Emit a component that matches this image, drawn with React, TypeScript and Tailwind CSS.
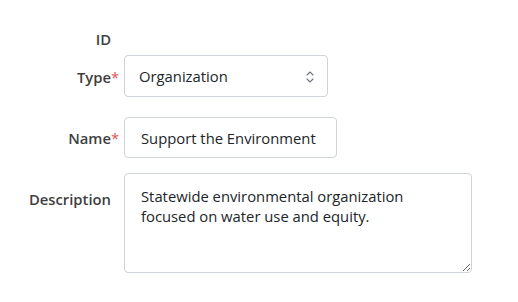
import React from "react";

const font = { fontFamily: '"Open Sans", "Noto Sans", sans-serif' };

const Required = () => (
  <span className="inline-block w-0 text-[#e05252] font-normal">*</span>
);

function UpDown() {
  return (
    <svg width="10" height="14" viewBox="0 0 10 14" fill="none" stroke="#6c757d" strokeWidth="1.1" strokeLinecap="round" strokeLinejoin="round">
      <path d="M2 5 L5 2 L8 5" />
      <path d="M2 9 L5 12 L8 9" />
    </svg>
  );
}

export default function App() {
  return (
    <div className="min-h-[302px] w-[518px] bg-white text-[14.8px] text-[#212529] pt-[29px]" style={font}>
      {/* ID */}
      <div className="flex items-center h-5">
        <div className="w-[111px] text-right font-semibold text-[#3f3f3f] leading-5">ID</div>
      </div>

      {/* Type */}
      <div className="flex items-center mt-[6px]">
        <div className="w-[111px] text-right font-semibold text-[#3f3f3f] leading-5 pt-px">
          Type
          <Required />
        </div>
        <div className="ml-[13px] w-[204px] h-[42px] border border-[#ced4da] rounded-[4px] flex items-center justify-between pl-[14px] pr-[12px] pt-px">
          <span>Organization</span>
          <UpDown />
        </div>
      </div>

      {/* Name */}
      <div className="flex items-center mt-[20px]">
        <div className="w-[111px] text-right font-semibold text-[#3f3f3f] leading-5 pt-px">
          Name
          <Required />
        </div>
        <input
          className="ml-[13px] w-[213px] h-[41px] border border-[#ced4da] rounded-[4px] px-4 outline-none"
          defaultValue="Support the Environment"
        />
      </div>

      {/* Description */}
      <div className="flex items-start mt-[15px]">
        <div className="w-[111px] text-right font-semibold text-[#3f3f3f] leading-5 pt-4">Description</div>
        <textarea
          className="ml-[13px] w-[348px] h-[100px] border border-[#ced4da] rounded-[4px] px-4 pt-3 leading-[20px] outline-none"
          defaultValue="Statewide environmental organization focused on water use and equity."
        />
      </div>
    </div>
  );
}
